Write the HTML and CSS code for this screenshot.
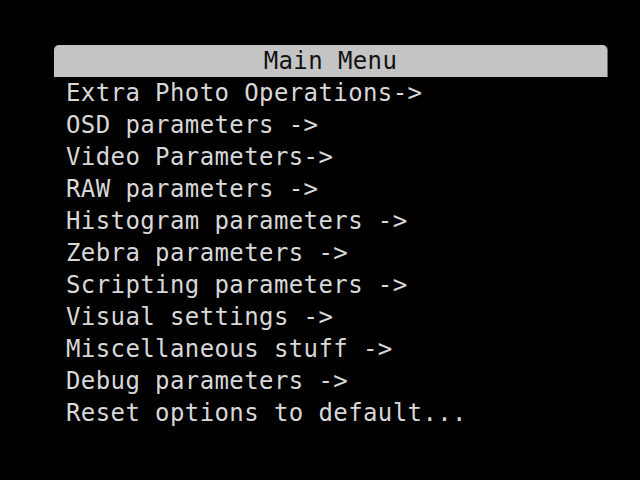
FILE: index.html
```html
<!DOCTYPE html>
<html lang="en">

<head>
    <meta charset="utf-8">
    <title>Main Menu</title>
    <link rel="stylesheet" href="styles.css">
</head>

<body>
    <section class="menu">
        <h1 class="titel">Main Menu</h1>
        <ul class="punkter">
            <li>Extra Photo Operations-&gt;</li>
            <li>OSD parameters -&gt;</li>
            <li>Video Parameters-&gt;</li>
            <li>RAW parameters -&gt;</li>
            <li>Histogram parameters -&gt;</li>
            <li>Zebra parameters -&gt;</li>
            <li>Scripting parameters -&gt;</li>
            <li>Visual settings -&gt;</li>
            <li>Miscellaneous stuff -&gt;</li>
            <li>Debug parameters -&gt;</li>
            <li>Reset options to default...</li>
        </ul>
    </section>
</body>

</html>
```

FILE: styles.css
```css
body {
    margin: 0;
    background-color: #000;
    width: 640px;
    height: 480px;
    overflow: hidden;
    font-family: "DejaVu Sans Mono", "Liberation Mono", monospace;
    font-size: 24px;
    letter-spacing: 0.4px;
}

.menu {
    margin: 45px 0 0 54px;
    width: 553px;
}

.titel {
    margin: 0;
    height: 32px;
    line-height: 32px;
    font-size: 24px;
    font-weight: normal;
    text-align: center;
    color: #111;
    background-color: #c4c4c4;
    border-radius: 5px 5px 0 0;
    box-shadow: 1px 0 0 #6a6a6a;
}

.punkter {
    list-style: none;
    margin: 0;
    padding: 0 0 0 12px;
}

.punkter li {
    height: 32px;
    line-height: 32px;
    color: #d8d8d8;
    white-space: pre;
}
```
